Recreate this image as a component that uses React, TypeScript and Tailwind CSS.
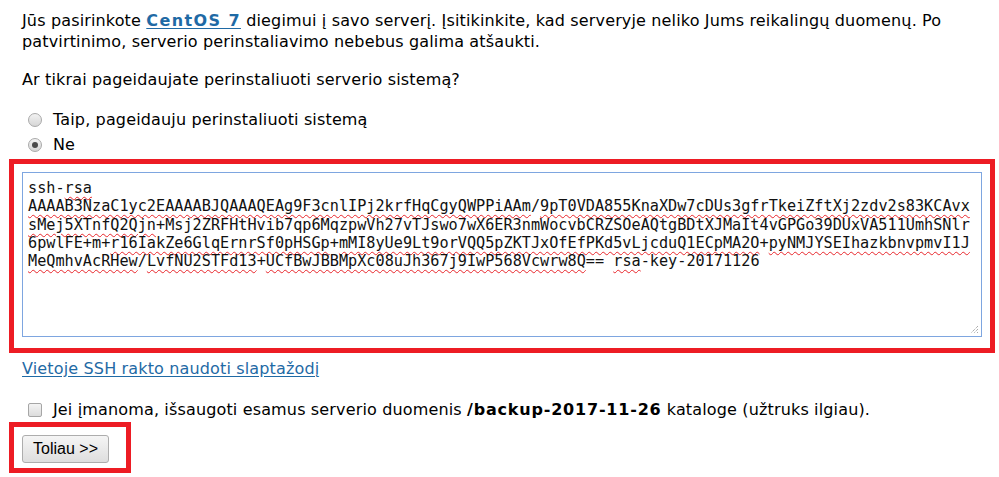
export default function App() {
    return (
        <div className="min-h-screen bg-white pl-[9px] pt-[10px] font-['DejaVu_Sans',sans-serif] text-[16px] leading-[21px] tracking-[0.15px] text-black">
            <div className="pl-[13px]">
                <p>
                    Jūs pasirinkote <a href="#" className="font-bold tracking-[1.4px] text-[#1f6aa5] underline underline-offset-2">CentOS 7</a> diegimui į savo serverį. Įsitikinkite, kad serveryje neliko Jums reikalingų duomenų. Po
                    <br />
                    patvirtinimo, serverio perinstaliavimo nebebus galima atšaukti.
                </p>
                <p className="mt-[17px]">Ar tikrai pageidaujate perinstaliuoti serverio sistemą?</p>
                <div className="mt-[17px] flex flex-col leading-[25px]">
                    <Radio label="Taip, pageidauju perinstaliuoti sistemą" />
                    <Radio label="Ne" checked />
                </div>
            </div>

            <div className="mt-[2px] w-[986px] border-[5px] border-[#ed1c24] p-[8px] pb-[11px]">
                <KeyBox />
            </div>

            <div className="pl-[13px]">
                <a href="#" className="mt-[5px] inline-block text-[#1f6aa5] underline underline-offset-2">Vietoje SSH rakto naudoti slaptažodį</a>
                <label className="mt-[20px] flex items-center">
                    <span className="ml-[6px] mr-[11px] h-[14px] w-[14px] rounded-[2px] border border-[#a6a6a6] bg-gradient-to-b from-[#f4f4f4] to-[#dcdcdc]" />
                    <span>
                        Jei įmanoma, išsaugoti esamus serverio duomenis <b className="tracking-[0.8px]">/backup-2017-11-26</b> kataloge (užtruks ilgiau).
                    </span>
                </label>
            </div>

            <div className="mt-[2px] h-[51px] w-[122px] border-[5px] border-[#ed1c24] pl-[8px] pt-[8px]">
                <button className="h-[28px] w-[87px] rounded-[3px] border border-[#adadad] bg-gradient-to-b from-[#f5f5f5] to-[#dedede] font-['Liberation_Sans',sans-serif] text-[16px] leading-none tracking-normal text-black">
                    Toliau &gt;&gt;
                </button>
            </div>
        </div>
    )
}

function Radio({ label, checked }: { label: string; checked?: boolean }) {
    return (
        <label className="flex items-center">
            <span className="ml-[6px] mr-[11px] flex h-[14px] w-[14px] items-center justify-center rounded-full border border-[#a9a9a9] bg-gradient-to-b from-[#f2f2f2] to-[#d6d6d6]">
                {checked && <span className="h-[6px] w-[6px] rounded-full bg-[#4a4a4a]" />}
            </span>
            <span>{label}</span>
        </label>
    )
}

// spell-check squiggles, as the browser drew them
function W({ children }: { children: string }) {
    return <span className="underline decoration-wavy decoration-[#e8262b] decoration-1 underline-offset-[3px]">{children}</span>
}

function KeyBox() {
    return (
        <div className="relative h-[165px] w-[960px] border border-[#7ea6e0] px-[5px] pt-[6px] font-['DejaVu_Sans_Mono',monospace] text-[15.2px] leading-[18.3px] tracking-normal whitespace-pre text-[#111]">
            <div>ssh-<W>rsa</W></div>
            <div><W>AAAAB3NzaC1yc2EAAAABJQAAAQEAg9F3cnlIPj2krfHqCgyQWPPiAAm</W>/<W>9pT0VDA855KnaXDw7cDUs3gfrTkeiZftXj2zdv2s83KCAvx</W></div>
            <div><W>sMej5XTnfQ2Qjn</W>+Msj2ZRFHtHvib7qp6MqzpwVh27vTJswo7wX6ER3nmWocvbCRZSOeAQtgBDtXJMaIt4vGPGo39DUxVA511UmhSNlr</div>
            <div>6pwlFE+m+<W>r16IakZe6GlqErnrSf0pHSGp</W>+<W>mMI8yUe9Lt9orVQQ5pZKTJxOfEfPKd5vLjcduQ1ECpMA2O</W>+<W>pyNMJYSEIhazkbnvpmvI1J</W></div>
            <div><W>MeQmhvAcRHew</W>/<W>LvfNU2STFd13</W>+<W>UCfBwJBBMpXc08uJh367j9IwP568Vcwrw8Q</W>== <W>rsa</W>-key-20171126</div>
            <svg className="absolute bottom-[2px] right-[2px]" width="10" height="10" viewBox="0 0 10 10">
                <path d="M9 2 L2 9 M9 5 L5 9 M9 8 L8 9" stroke="#8a8a8a" strokeWidth="1" strokeDasharray="1 1" />
            </svg>
        </div>
    )
}
